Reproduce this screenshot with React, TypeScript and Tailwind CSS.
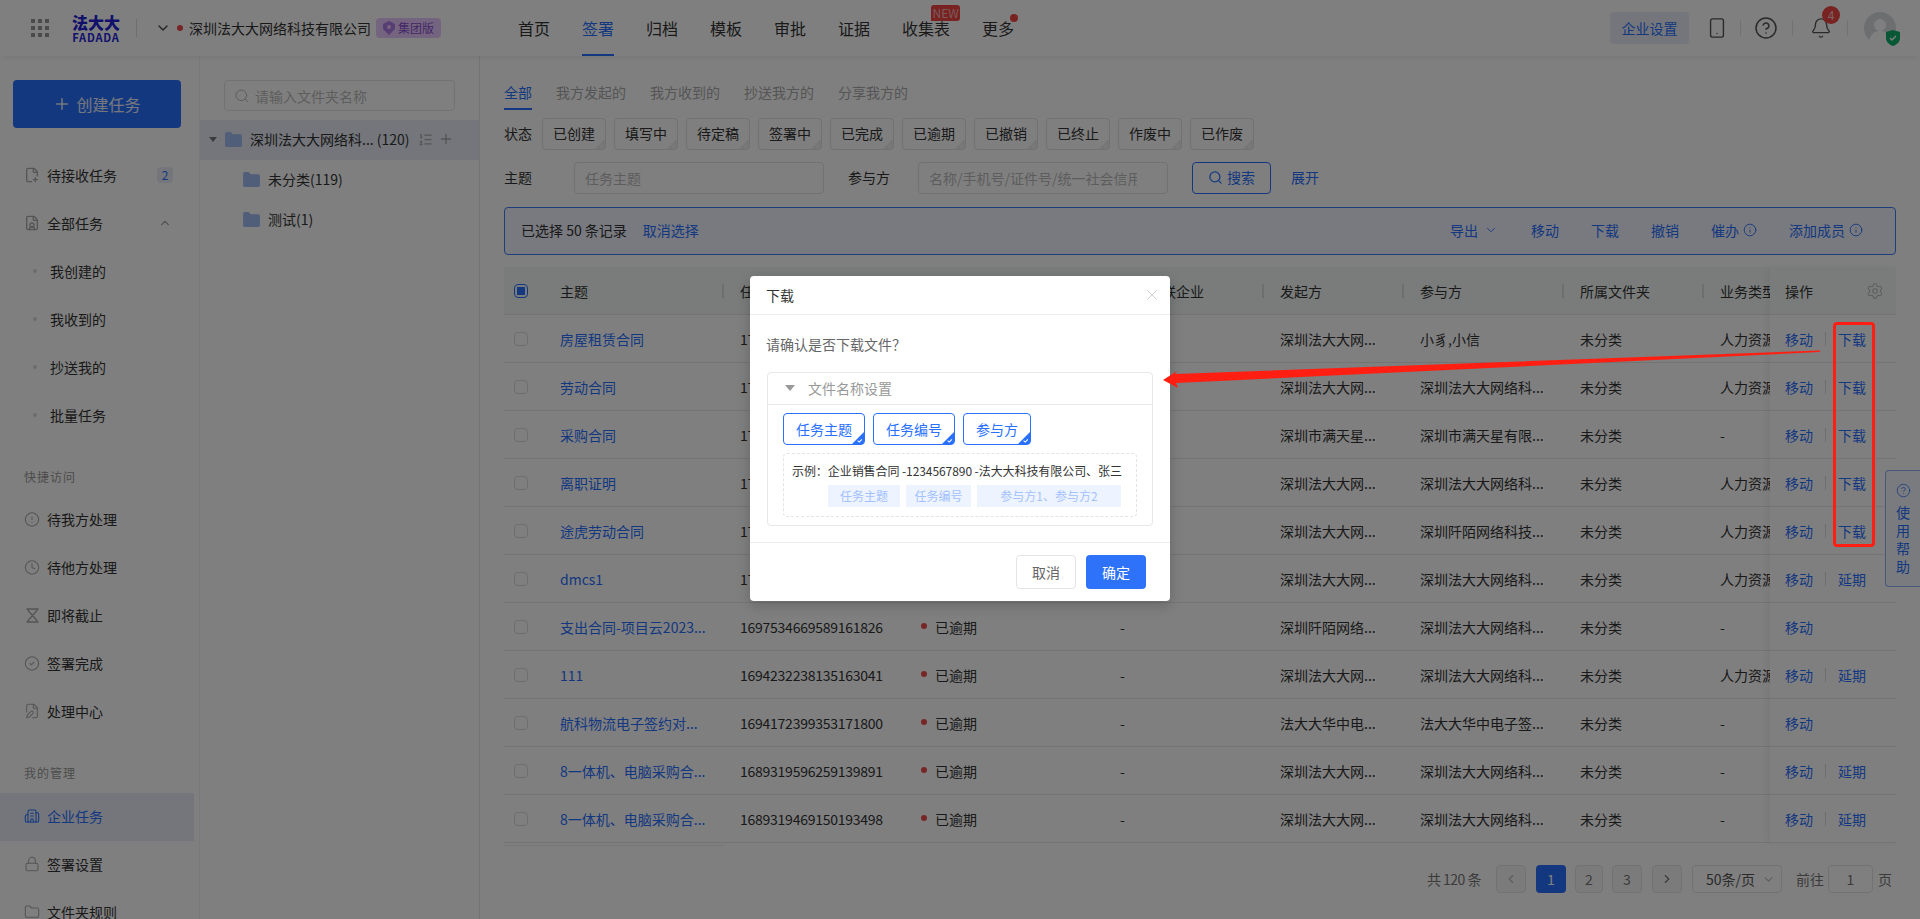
import {
  Bell,
  Building2,
  ChevronDown,
  ChevronLeft,
  ChevronRight,
  ChevronUp,
  CircleAlert,
  CircleCheck,
  CircleHelp,
  Clock,
  FilePen,
  FilePlus2,
  FileUser,
  Folder,
  Info,
  ListOrdered,
  Lock,
  Plus,
  Search,
  Settings,
  Smartphone,
  X,
} from 'lucide-react';
import type { ReactNode } from 'react';

const statusTags = ['已创建', '填写中', '待定稿', '签署中', '已完成', '已逾期', '已撤销', '已终止', '作废中', '已作废'];
const topNav = ['归档', '模板', '审批', '证据'];

const FD = '深圳法大大网...';
const FDP = '深圳法大大网络科...';

type Row = {
  title: string;
  id: string;
  starter: string;
  party: string;
  biz: string;
  action?: string;
};

const rows: Row[] = [
  { title: '房屋租赁合同', id: '1710234566891713', starter: FD, party: '小豸,小信', biz: '人力资源', action: '下载' },
  { title: '劳动合同', id: '1710234566891714', starter: FD, party: FDP, biz: '人力资源', action: '下载' },
  { title: '采购合同', id: '1710234566891715', starter: '深圳市满天星...', party: '深圳市满天星有限...', biz: '-', action: '下载' },
  { title: '离职证明', id: '1710234566891716', starter: FD, party: FDP, biz: '人力资源', action: '下载' },
  { title: '途虎劳动合同', id: '1710234566891717', starter: FD, party: '深圳阡陌网络科技...', biz: '人力资源', action: '下载' },
  { title: 'dmcs1', id: '1710234566891718', starter: FD, party: FDP, biz: '人力资源', action: '延期' },
  { title: '支出合同-项目云2023...', id: '1697534669589161826', starter: '深圳阡陌网络...', party: FDP, biz: '-' },
  { title: '111', id: '1694232238135163041', starter: FD, party: FDP, biz: '人力资源', action: '延期' },
  { title: '航科物流电子签约对...', id: '1694172399353171800', starter: '法大大华中电...', party: '法大大华中电子签...', biz: '-' },
  { title: '8一体机、电脑采购合...', id: '1689319596259139891', starter: FD, party: FDP, biz: '-', action: '延期' },
  { title: '8一体机、电脑采购合...', id: '1689319469150193498', starter: FD, party: FDP, biz: '-', action: '延期' },
];

function FolderFill({ className }: { className: string }) {
  return (
    <svg viewBox="0 0 18 16" className={className} fill="#a3bcf2">
      <path d="M0 2a2 2 0 0 1 2-2h4l2 2.5h8a2 2 0 0 1 2 2V14a2 2 0 0 1-2 2H2a2 2 0 0 1-2-2z" />
    </svg>
  );
}

function HourglassIcon() {
  return (
    <svg viewBox="0 0 16 16" className="h-[15px] w-[15px]" fill="none" stroke="currentColor" strokeWidth="1.500">
      <path d="M1.500 1h13M1.500 15h13M3.500 1v2L8 8l4.500-5V1M3.500 15v-2L8 8l4.500 5v2" />
    </svg>
  );
}

function Corner({ color, className }: { color: string; className: string }) {
  return (
    <svg viewBox="0 0 14 14" className={`absolute right-0 bottom-0 ${className}`}>
      <path d="M14 0v11a3 3 0 0 1-3 3H0z" fill={color} />
      <path d="M6.500 10l2 1.800 3-3.300" fill="none" stroke="#fff" strokeWidth="1.200" />
    </svg>
  );
}

function SideItem({ icon, label, active }: { icon: ReactNode; label: string; active?: boolean }) {
  return (
    <div
      className={`flex h-12 w-[194px] items-center pb-[2px] pl-6 text-sm ${
        active ? 'bg-[#e9edf7] text-[#2970ff]' : 'text-[#333]'
      }`}
    >
      <span className={`mr-[7px] flex w-4 justify-center ${active ? 'text-[#2970ff]' : 'text-[#aaa]'}`}>{icon}</span>
      {label}
    </div>
  );
}

function SubItem({ label }: { label: string }) {
  return (
    <div className="flex h-12 items-center pb-[2px] pl-[33px] text-sm text-[#333]">
      <span className="mr-[13px] h-1 w-1 rounded-full bg-[#d8d8d8]" />
      {label}
    </div>
  );
}

function Sidebar() {
  return (
    <aside className="w-[200px] shrink-0 border-r border-[#f2f2f2] pt-6">
      <button className="ml-[13px] flex h-12 w-[168px] items-center justify-center gap-[5px] rounded bg-[#2970ff] text-base text-white/90">
        <Plus size={18} />
        创建任务
      </button>
      <div className="mt-6">
        <div className="flex h-12 items-center pb-[2px] pl-6 text-sm text-[#333]">
          <FilePlus2 size={16} className="mr-[7px] text-[#aaa]" />
          待接收任务
          <span className="ml-10 flex h-4 w-4 items-center justify-center rounded-sm bg-[#e9edf7] text-xs text-[#2970ff]">
            2
          </span>
        </div>
        <div className="flex h-12 items-center pb-[2px] pl-6 text-sm text-[#333]">
          <FileUser size={16} className="mr-[7px] text-[#aaa]" />
          全部任务
          <ChevronUp size={14} className="ml-[55px] text-[#aaa]" />
        </div>
        <SubItem label="我创建的" />
        <SubItem label="我收到的" />
        <SubItem label="抄送我的" />
        <SubItem label="批量任务" />
      </div>
      <div className="mt-6 h-8 pl-6 text-xs leading-[26px] tracking-[1px] text-[#999]">快捷访问</div>
      <SideItem icon={<CircleAlert size={17} strokeWidth={1.6} />} label="待我方处理" />
      <SideItem icon={<Clock size={17} strokeWidth={1.6} />} label="待他方处理" />
      <SideItem icon={<HourglassIcon />} label="即将截止" />
      <SideItem icon={<CircleCheck size={17} strokeWidth={1.6} />} label="签署完成" />
      <SideItem icon={<FilePen size={16} strokeWidth={1.6} />} label="处理中心" />
      <div className="mt-6 h-[33px] pl-6 text-xs leading-[26px] tracking-[1px] text-[#999]">我的管理</div>
      <SideItem active icon={<Building2 size={16} strokeWidth={1.6} />} label="企业任务" />
      <SideItem icon={<Lock size={16} strokeWidth={1.6} />} label="签署设置" />
      <SideItem icon={<Folder size={16} strokeWidth={1.6} />} label="文件夹规则" />
    </aside>
  );
}

function FolderPanel() {
  return (
    <section className="w-[280px] shrink-0 border-r border-[#e8e8e8] pt-6">
      <div className="ml-6 flex h-[31px] w-[231px] items-center rounded border border-[#e4e4e4] pl-[9px] text-sm text-[#bbb]">
        <Search size={16} strokeWidth={1.5} className="mr-[5px]" />
        请输入文件夹名称
      </div>
      <div className="mt-[9px] flex h-10 items-center bg-[#e9edf7] pb-[2px] pl-[9px] text-sm text-[#333]">
        <span className="mr-2 h-0 w-0 border-x-[4px] border-t-[5px] border-x-transparent border-t-[#777]" />
        <FolderFill className="mr-2 h-[15px] w-[17px]" />
        <span className="whitespace-nowrap">深圳法大大网络科... (120)</span>
        <ListOrdered size={15} className="ml-2 text-[#aaa]" />
        <Plus size={16} className="ml-[5px] text-[#aaa]" />
      </div>
      <div className="flex h-10 items-center pb-[2px] pl-[43px] text-sm text-[#333]">
        <FolderFill className="mr-2 h-[15px] w-[17px]" />
        未分类(119)
      </div>
      <div className="flex h-10 items-center pb-[2px] pl-[43px] text-sm text-[#333]">
        <FolderFill className="mr-2 h-[15px] w-[17px]" />
        测试(1)
      </div>
    </section>
  );
}

function HeaderCell({ className, label }: { className: string; label: string }) {
  return (
    <div className={`flex shrink-0 items-center justify-between pl-4 ${className}`}>
      <span className="whitespace-nowrap">{label}</span>
      <span className="h-[14px] w-[2px] bg-[#ddd]" />
    </div>
  );
}

function RowLine({ row }: { row: Row }) {
  return (
    <div className="flex h-12 items-center border-b border-[#e8e8e8] text-sm whitespace-nowrap text-[#333]">
      <div className="w-10 shrink-0 pl-[10px]">
        <span className="block h-[14px] w-[14px] rounded-sm border border-[#ddd]" />
      </div>
      <div className="w-[180px] shrink-0 pl-4 text-[#2970ff]">{row.title}</div>
      <div className="w-[180px] shrink-0 pl-4 tracking-[-0.25px]">{row.id}</div>
      <div className="flex w-[200px] shrink-0 items-center pl-[17px]">
        <span className="mr-2 h-[6px] w-[6px] -translate-y-px rounded-full bg-[#f04b4b]" />
        已逾期
      </div>
      <div className="w-40 shrink-0 pl-4">-</div>
      <div className="w-[140px] shrink-0 pl-4">{row.starter}</div>
      <div className="w-40 shrink-0 pl-4">{row.party}</div>
      <div className="w-[140px] shrink-0 pl-4">未分类</div>
      <div className="w-40 shrink-0 pl-4">{row.biz}</div>
    </div>
  );
}

function Table() {
  return (
    <div className="relative mt-3 flex w-[1392px]">
      <div className="w-[1266px] overflow-hidden">
        <div className="flex h-12 items-center border-b border-[#e8e8e8] bg-[#f4f9f8] text-sm text-[#333]">
          <div className="w-10 shrink-0 pl-[10px]">
            <span className="flex h-[14px] w-[14px] items-center justify-center rounded-sm border border-[#2970ff]">
              <span className="h-2 w-2 bg-[#2970ff]" />
            </span>
          </div>
          <HeaderCell className="w-[180px]" label="主题" />
          <HeaderCell className="w-[180px]" label="任务编号" />
          <HeaderCell className="w-[200px]" label="状态" />
          <HeaderCell className="w-40" label="任务关联企业" />
          <HeaderCell className="w-[140px]" label="发起方" />
          <HeaderCell className="w-40" label="参与方" />
          <HeaderCell className="w-[140px]" label="所属文件夹" />
          <div className="w-40 shrink-0 pl-4 whitespace-nowrap">业务类型</div>
        </div>
        {rows.map((row, i) => (
          <RowLine key={i} row={row} />
        ))}
      </div>
      <div className="w-[126px] shrink-0 shadow-[-4px_0_8px_rgba(0,0,0,0.05)]">
        <div className="flex h-12 items-center justify-between border-b border-[#e8e8e8] bg-[#f4f9f8] pr-3 pl-[15px] text-sm text-[#333]">
          操作
          <Settings size={18} strokeWidth={1.4} className="text-[#bbb]" />
        </div>
        {rows.map((row, i) => (
          <div key={i} className="flex h-12 items-center border-b border-[#e8e8e8] pl-[15px] text-sm text-[#2970ff]">
            移动
            {row.action && (
              <>
                <span className="mx-[12px] h-[14px] w-px bg-[#ddd]" />
                {row.action}
              </>
            )}
          </div>
        ))}
      </div>
      {/* bottom edge of the frozen left columns */}
      <span className="absolute top-[578px] left-0 h-px w-[220px] bg-[#eee]" />
    </div>
  );
}

function Pagination() {
  return (
    <div className="mt-[22px] flex h-7 w-[1392px] items-center justify-end pr-1 text-sm text-[#777]">
      <span className="tracking-[-0.5px]">共 120 条</span>
      <span className="ml-[15px] flex h-7 w-[30px] items-center justify-center rounded-sm border border-[#e4e4e4] bg-[#f7f7f7] text-[#bbb]">
        <ChevronLeft size={14} />
      </span>
      <span className="ml-[10px] flex h-7 w-[30px] items-center justify-center rounded-sm bg-[#2970ff] text-white">1</span>
      <span className="ml-[9px] flex h-7 w-7 items-center justify-center rounded-sm border border-[#e4e4e4] bg-[#f7f7f7]">2</span>
      <span className="ml-[9px] flex h-7 w-[30px] items-center justify-center rounded-sm border border-[#e4e4e4] bg-[#f7f7f7]">3</span>
      <span className="ml-[10px] flex h-7 w-[30px] items-center justify-center rounded-sm border border-[#e4e4e4] bg-[#f7f7f7]">
        <ChevronRight size={14} />
      </span>
      <span className="ml-[10px] flex h-7 w-[90px] items-center justify-between rounded border border-[#e4e4e4] pr-[6px] pl-[13px] text-[#555]">
        50条/页
        <ChevronDown size={13} className="text-[#bbb]" />
      </span>
      <span className="ml-[14px]">前往</span>
      <span className="ml-1 flex h-7 w-[45px] items-center justify-center rounded border border-[#e4e4e4]">1</span>
      <span className="ml-[5px]">页</span>
    </div>
  );
}

function Main() {
  return (
    <main className="min-w-0 flex-1 pt-6 pl-6">
      <div className="flex h-[30px] gap-6 text-sm leading-[24px] whitespace-nowrap text-[#aaa]">
        <span className="border-b-2 border-[#2970ff] text-[#2970ff]">全部</span>
        <span>我方发起的</span>
        <span>我方收到的</span>
        <span>抄送我方的</span>
        <span>分享我方的</span>
      </div>
      <div className="mt-2 flex h-8 items-center text-sm text-[#333]">
        <span className="w-[38px] pb-[2px]">状态</span>
        <div className="flex gap-2">
          {statusTags.map((tag) => (
            <span
              key={tag}
              className="relative flex h-8 w-16 items-center justify-center rounded border border-[#e4e4e4] pb-[2px] text-sm text-[#333]"
            >
              {tag}
              <Corner color="#ececec" className="h-[10px] w-[10px]" />
            </span>
          ))}
        </div>
      </div>
      <div className="mt-3 flex h-8 items-center text-sm text-[#333]">
        <span className="w-[70px] pb-[2px]">主题</span>
        <input
          readOnly
          placeholder="任务主题"
          className="h-8 w-[250px] rounded border border-[#e4e4e4] px-[10px] text-sm placeholder:text-[#bbb]"
        />
        <span className="ml-6 w-[70px] pb-[2px]">参与方</span>
        <input
          readOnly
          placeholder="名称/手机号/证件号/统一社会信用代码"
          className="h-8 w-[250px] rounded border border-[#e4e4e4] pr-[30px] pl-[10px] text-sm placeholder:text-[#bbb]"
        />
        <button className="ml-6 flex h-8 w-[79px] items-center justify-center gap-1 rounded border border-[#2970ff] pb-[2px] text-[#2970ff]">
          <Search size={15} />
          搜索
        </button>
        <span className="ml-5 pb-[2px] text-[#2970ff]">展开</span>
      </div>
      <div className="mt-[13px] flex h-12 w-[1392px] items-center rounded border border-[#3f7ff5] bg-[#f0f4ff] pr-[32px] pb-[2px] pl-4 text-sm text-[#333]">
        已选择 50 条记录
        <span className="ml-4 text-[#2970ff]">取消选择</span>
        <div className="ml-auto flex items-center text-[#2970ff]">
          导出
          <ChevronDown size={14} strokeWidth={1.5} className="ml-[6px]" />
          <span className="ml-[33px]">移动</span>
          <span className="ml-8">下载</span>
          <span className="ml-8">撤销</span>
          <span className="ml-8">催办</span>
          <Info size={14} strokeWidth={1.5} className="ml-1" />
          <span className="ml-8">添加成员</span>
          <Info size={14} strokeWidth={1.5} className="ml-1" />
        </div>
      </div>
      <Table />
      <Pagination />
    </main>
  );
}

function TopBar() {
  return (
    <header className="relative z-10 flex h-14 items-center bg-white pl-[31px] shadow-[0_2px_6px_rgba(0,0,0,0.06)]">
      <svg viewBox="0 0 18 18" className="h-[18px] w-[18px]" fill="#999">
        <rect x="0" y="0" width="4" height="4" />
        <rect x="7" y="0" width="4" height="4" />
        <rect x="14" y="0" width="4" height="4" />
        <rect x="0" y="7" width="4" height="4" />
        <rect x="7" y="7" width="4" height="4" />
        <rect x="14" y="7" width="4" height="4" />
        <rect x="0" y="14" width="4" height="4" />
        <rect x="7" y="14" width="4" height="4" />
        <rect x="14" y="14" width="4" height="4" />
      </svg>
      <div className="ml-[22px] flex w-[50px] flex-col items-center whitespace-nowrap text-[#2222d8]">
        <span className="text-base leading-[15px] font-black">法大大</span>
        <span className="mt-[2px] text-[11px] leading-[10px] font-bold tracking-[0.8px]">FADADA</span>
      </div>
      <span className="ml-[15px] h-[18px] w-px bg-[#ddd]" />
      <ChevronDown size={16} className="ml-[18px] text-[#444]" />
      <span className="ml-[6px] h-[6px] w-[6px] rounded-full bg-[#f04b4b]" />
      <span className="ml-[6px] text-sm whitespace-nowrap text-[#333]">深圳法大大网络科技有限公司</span>
      <span className="ml-[5px] flex h-5 w-[65px] items-center justify-center gap-[3px] rounded bg-[#e8c9ff] text-xs text-[#8a4fd0]">
        <svg viewBox="0 0 12 14" className="h-[14px] w-3" fill="#b07be6">
          <path d="M6 0l6 3v5l-6 6-6-6V3z" />
          <circle cx="6" cy="6" r="2" fill="#e8c9ff" />
        </svg>
        集团版
      </span>
      <nav className="ml-[77px] flex items-center gap-8 text-base whitespace-nowrap text-[#333]">
        <span>首页</span>
        <span className="relative text-[#2970ff]">
          签署
          <span className="absolute top-[38px] left-0 h-[2px] w-8 bg-[#2970ff]" />
        </span>
        {topNav.map((item) => (
          <span key={item}>{item}</span>
        ))}
        <span className="relative">
          收集表
          <span className="absolute -top-[11px] left-[29px] flex h-4 w-[29px] items-center justify-center rounded-[3px] rounded-bl-none bg-[#f04444] text-xs leading-none text-[#f7b5b5]">
            NEW
          </span>
        </span>
        <span className="relative">
          更多
          <span className="absolute -top-[2px] -right-1 h-2 w-2 rounded-full bg-[#f04444]" />
        </span>
      </nav>
      <div className="ml-auto flex items-center pr-6">
        <span className="flex h-8 w-[79px] items-center justify-center rounded bg-[#e9edf7] text-sm text-[#2970ff]">
          企业设置
        </span>
        <Smartphone size={22} strokeWidth={1.5} className="ml-[17px] text-[#555]" />
        <span className="ml-3 h-4 w-px bg-[#e4e4e4]" />
        <CircleHelp size={24} strokeWidth={1.5} className="ml-[13px] text-[#555]" />
        <span className="ml-[14px] h-4 w-px bg-[#e4e4e4]" />
        <span className="relative ml-[17px]">
          <Bell size={22} strokeWidth={1.5} className="text-[#555]" />
          <span className="absolute -top-[11px] left-[12px] flex h-[18px] w-[18px] items-center justify-center rounded-full bg-[#f04444] text-xs text-white/70">
            4
          </span>
        </span>
        <span className="ml-[15px] h-4 w-px bg-[#e4e4e4]" />
        <span className="relative ml-4">
          <svg viewBox="0 0 32 32" className="h-8 w-8">
            <circle cx="16" cy="16" r="16" fill="#d8dde0" />
            <circle cx="16" cy="13" r="6" fill="#fff" />
            <path d="M5 29c2-8 6-10 11-10s9 2 11 10a16 16 0 0 1-22 0z" fill="#fff" />
          </svg>
          <svg viewBox="0 0 14 16" className="absolute -right-[4px] -bottom-[2px] h-4 w-[14px]">
            <path d="M7 0l7 2v6c0 4-3 6.500-7 8-4-1.500-7-4-7-8V2z" fill="#10b06a" />
            <path d="M4 8l2 2 4-4" fill="none" stroke="#fff" strokeWidth="1.400" />
          </svg>
        </span>
      </div>
    </header>
  );
}

function DownloadDialog() {
  const chips = ['任务主题', '任务编号', '参与方'];
  return (
    <div className="absolute top-[276px] left-[750px] z-30 h-[325px] w-[420px] rounded bg-white text-[#333] shadow-[0_4px_14px_rgba(0,0,0,0.2)]">
      <div className="flex h-[39px] items-center justify-between border-b border-[#ececec] pr-[9px] pl-4 text-sm">
        下载
        <X size={18} strokeWidth={1.2} className="text-[#ccc]" />
      </div>
      <div className="mt-[19px] pl-4 text-sm leading-5 text-[#666]">请确认是否下载文件？</div>
      <div className="mx-auto mt-[18px] h-[154px] w-[386px] rounded border border-[#e8e8e8]">
        <div className="flex h-8 items-center border-b border-[#e8e8e8] pb-[2px] pl-[17px] text-sm text-[#999]">
          <span className="mr-[13px] h-0 w-0 border-x-[5px] border-t-[6px] border-x-transparent border-t-[#999]" />
          文件名称设置
        </div>
        <div className="mt-[8px] flex gap-2 pl-[15px]">
          {chips.map((chip, i) => (
            <span
              key={chip}
              className={`relative flex h-8 items-center justify-center rounded border border-[#2970ff] text-sm text-[#2970ff] ${
                i === 2 ? 'w-[68px]' : 'w-[82px]'
              }`}
            >
              {chip}
              <Corner color="#2970ff" className="h-3 w-3" />
            </span>
          ))}
        </div>
        <div className="mx-auto mt-2 h-16 w-[354px] rounded border border-dashed border-[#e4e4e4] pt-2 pl-2 text-xs">
          <div className="leading-[18px] tracking-[-0.07px] whitespace-nowrap text-[#333]">示例：企业销售合同 -1234567890 -法大大科技有限公司、张三</div>
          <div className="mt-[5px] ml-[36px] flex gap-[6px] text-[#a3c1ff]">
            <span className="flex h-[22px] w-[72px] items-center justify-center bg-[#eef4ff]">任务主题</span>
            <span className="flex h-[22px] w-[65px] items-center justify-center bg-[#eef4ff]">任务编号</span>
            <span className="flex h-[22px] w-[144px] items-center justify-center bg-[#eef4ff]">参与方1、参与方2</span>
          </div>
        </div>
      </div>
      <div className="mt-4 flex h-[59px] items-start justify-end gap-[10px] border-t border-[#ececec] pt-3 pr-6 text-sm">
        <button className="h-[34px] w-[60px] rounded-sm border border-[#e4e4e4] text-[#666]">取消</button>
        <button className="h-[34px] w-[60px] rounded-sm bg-[#2e72fa] text-white">确定</button>
      </div>
    </div>
  );
}

export default function App() {
  return (
    <div
      className="relative h-[919px] w-[1920px] overflow-hidden bg-white"
      style={{ fontFamily: '"Noto Sans CJK SC", "Liberation Sans", sans-serif' }}
    >
      <TopBar />
      <div className="flex h-[863px]">
        <Sidebar />
        <FolderPanel />
        <Main />
      </div>
      {/* help tab stuck to the right edge */}
      <div className="absolute top-[470px] right-0 z-10 flex h-[117px] w-[35px] flex-col items-center rounded-l border border-r-0 border-[#8fb0f5] bg-[#f3f7ff] pt-3 text-sm leading-[18px] text-[#2970ff]">
        <CircleHelp size={15} strokeWidth={1.2} className="mb-[5px]" />
        <span>使</span>
        <span>用</span>
        <span>帮</span>
        <span>助</span>
      </div>
      <div className="absolute inset-0 z-20 bg-black/50" />
      <DownloadDialog />
      {/* red annotation drawn over the screenshot */}
      <div className="absolute top-[322px] left-[1833px] z-40 h-[225px] w-[42px] rounded-sm border-[3px] border-[#ff1f12]" />
      <svg viewBox="0 0 1920 919" className="pointer-events-none absolute inset-0 z-40 h-[919px] w-[1920px]">
        <polygon points="1820,350.500 1820,352 1176,383 1178,388 1163,380 1177,371 1175,374" fill="#ff1f12" />
      </svg>
    </div>
  );
}
